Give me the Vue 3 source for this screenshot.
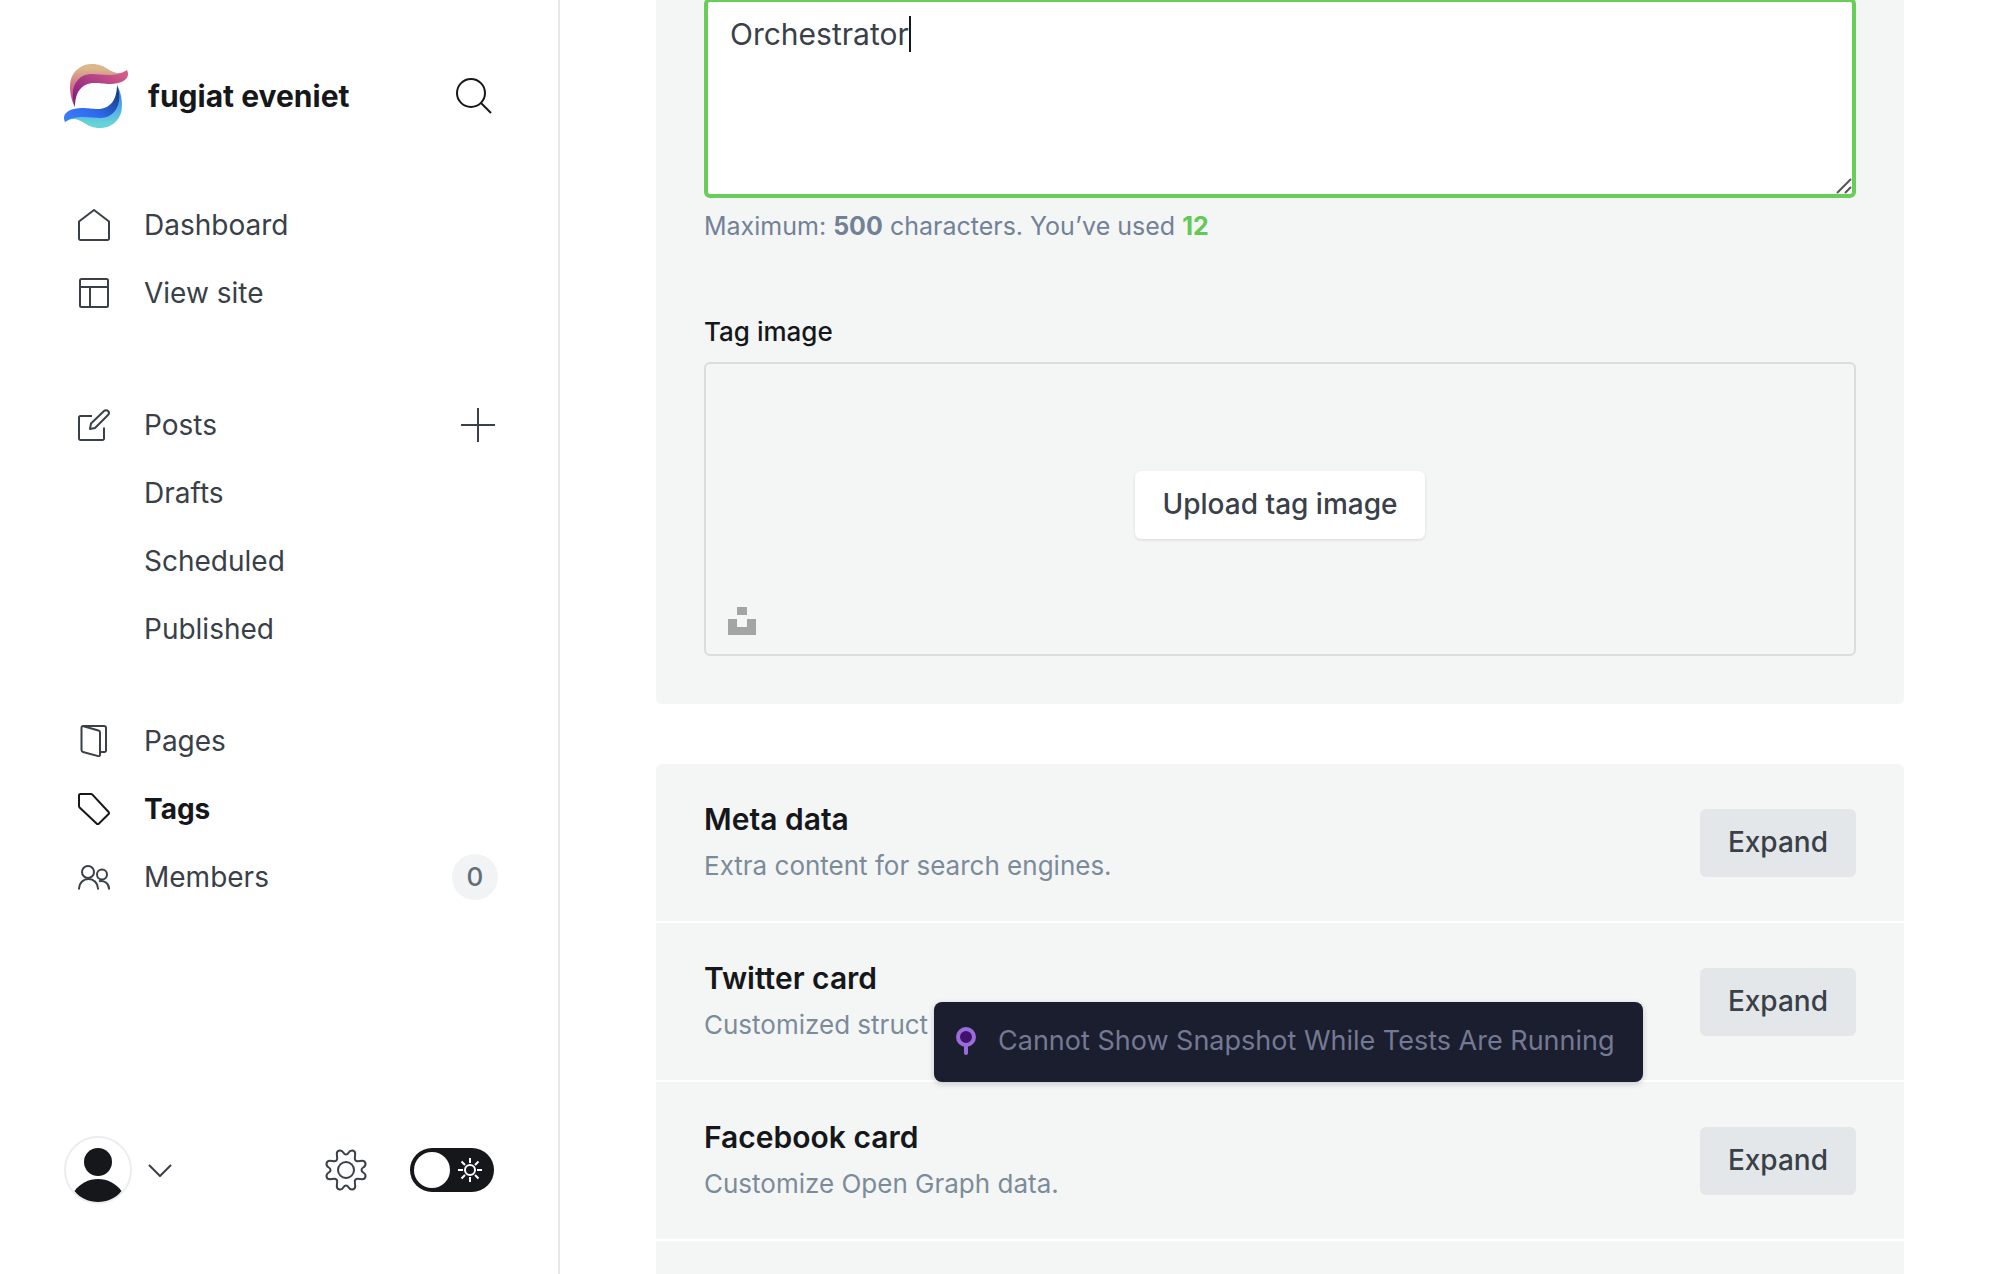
<script setup>
import { ref, computed } from 'vue'

const description = ref('Orchestrator')
const used = computed(() => description.value.length)
const lightMode = ref(true)

const sections = [
  { title: 'Meta data', text: 'Extra content for search engines.' },
  { title: 'Twitter card', text: 'Customized struct' },
  { title: 'Facebook card', text: 'Customize Open Graph data.' },
]
</script>

<template>
  <div class="app">
    <aside class="sidebar">
      <header class="brand">
        <svg class="logo" viewBox="0 0 64 64" aria-hidden="true">
          <defs>
            <linearGradient id="sand" x1="0" y1="0" x2="0" y2="1">
              <stop offset="0.1" stop-color="#dbb78b" />
              <stop offset="0.5" stop-color="#cf7389" />
              <stop offset="1" stop-color="#b8408a" />
            </linearGradient>
            <linearGradient id="plum" x1="0" y1="1" x2="1" y2="0">
              <stop offset="0.1" stop-color="#861c80" />
              <stop offset="1" stop-color="#dc648a" />
            </linearGradient>
            <linearGradient id="aqua" x1="0" y1="0" x2="0" y2="1">
              <stop offset="0.1" stop-color="#66d3d8" />
              <stop offset="0.6" stop-color="#479ced" />
              <stop offset="1" stop-color="#3b82f9" />
            </linearGradient>
            <linearGradient id="navy" x1="0" y1="1" x2="1" y2="0">
              <stop offset="0.1" stop-color="#173a80" />
              <stop offset="0.6" stop-color="#2f6af0" />
              <stop offset="1" stop-color="#3b82f9" />
            </linearGradient>
          </defs>
          <g v-for="part in [{ back: 'sand', front: 'plum', turn: 0 }, { back: 'aqua', front: 'navy', turn: 180 }]" :key="part.back" :transform="`rotate(${part.turn} 32 32)`">
            <path d="M11 43C7 36 5 26 6.500 17C9 6 18 0 28 0C42 0 45 9 55 9C59 9 61 7 63 6C60 11 54 14 46 13L25 12C15 14 9 22 9 32Z" :fill="`url(#${part.back})`" />
            <path d="M11 43C4 24 14 10 27 10C38 10 52 14 63 6C67 14 59 20 46 20C39 20 37 19 30 19C18 19 11 28 11 43Z" :fill="`url(#${part.front})`" />
          </g>
        </svg>
        <span class="site-title">fugiat eveniet</span>
        <button class="search" aria-label="Search">
          <svg width="36" height="36" viewBox="0 0 36 36"><circle cx="15" cy="15" r="14" /><path d="M25 25l10 10" /></svg>
        </button>
      </header>

      <nav class="nav">
        <ul class="group">
          <li>
            <a href="#dashboard">
              <svg class="icon" viewBox="0 0 32 32"><path d="M1 12.500L16 1l15 11.500V29.500a1.500 1.500 0 0 1-1.500 1.500H2.500A1.500 1.500 0 0 1 1 29.500z" /></svg>
              Dashboard
            </a>
          </li>
          <li>
            <a href="#site">
              <svg class="icon" viewBox="0 0 32 32"><rect x="2" y="2" width="28" height="28" rx="1.500" /><path d="M2 10h28M12 10v20" /></svg>
              View site
            </a>
          </li>
        </ul>
        <ul class="group posts">
          <li>
            <a href="#posts">
              <svg class="icon" viewBox="0 0 32 32"><path d="M14 7H2.500A1.500 1.500 0 0 0 1 8.500v21A1.500 1.500 0 0 0 2.500 31h22a1.500 1.500 0 0 0 1.500-1.500V18.500M12 20l1-5.500L26 2a2.600 2.600 0 0 1 4 4L17 19z" /></svg>
              Posts
            </a>
            <button class="plus" aria-label="New post">
              <svg width="34" height="34" viewBox="0 0 34 34"><path d="M17 0v34M0 17h34" /></svg>
            </button>
          </li>
          <li><a href="#drafts" class="sub">Drafts</a></li>
          <li><a href="#scheduled" class="sub">Scheduled</a></li>
          <li><a href="#published" class="sub">Published</a></li>
        </ul>
        <ul class="group">
          <li>
            <a href="#pages">
              <svg class="icon" viewBox="0 0 32 32"><path d="M4.500 1H26a2 2 0 0 1 2 2v22.500a1.500 1.500 0 0 1-1.500 1.500H22M5.500 1.200l15 4.300A2 2 0 0 1 22 7.400V30a1.200 1.200 0 0 1-1.600 1.100L5 27a2 2 0 0 1-1.500-2V2.600A1.500 1.500 0 0 1 5.500 1.200z" /></svg>
              Pages
            </a>
          </li>
          <li>
            <a href="#tags" class="active" aria-current="page">
              <svg class="icon" viewBox="0 0 32 32"><path d="M2.500 1H13a2 2 0 0 1 1.400.600L30.600 19a1.400 1.400 0 0 1 0 2L20.500 31a1 1 0 0 1-1.400 0L1.600 14.400A2 2 0 0 1 1 13V2.500A1.500 1.500 0 0 1 2.500 1z" /></svg>
              Tags
            </a>
          </li>
          <li>
            <a href="#members">
              <svg class="icon" viewBox="0 0 32 32"><circle cx="10" cy="11" r="6" /><path d="M1 28.500v-1a9.500 9.500 0 0 1 19 0v1" /><circle cx="24" cy="13.500" r="5" /><path d="M21 20.300c5-1.300 10 2 10 7.200v1" /></svg>
              Members
            </a>
            <span class="badge">0</span>
          </li>
        </ul>
      </nav>

      <footer class="account">
        <button class="user" aria-label="Account menu">
          <svg width="68" height="68" viewBox="0 0 68 68">
            <circle cx="34" cy="34" r="33" fill="#fff" stroke="#ebedee" stroke-width="2" />
            <circle cx="34" cy="26" r="14" fill="#15171a" />
            <path d="M10.500 55C16 47.500 24.500 43 34 43s18 4.500 23.500 12C51.500 62.500 43 66 34 66s-17.500-3.500-23.500-11z" fill="#15171a" />
          </svg>
          <svg class="chevron" width="24" height="14" viewBox="0 0 24 14"><path d="M1 2l11 11L23 2" /></svg>
        </button>
        <a href="#settings" class="settings" aria-label="Settings">
          <svg width="42" height="42" viewBox="-21 -21 42 42">
            <circle r="8" />
            <path v-for="n in 4" :key="n" :transform="`rotate(${n * 90})`" d="M0-15.500Q1.500-15.500 2.500-17.200Q4-19.800 6.500-19.500Q9.300-19 9.200-16L8.800-12Q8.700-8.700 12-8.800L16-9.200Q19-9.300 19.500-6.500Q19.800-4 17.200-2.500Q15.500-1.500 15.500 0" />
          </svg>
        </a>
        <label class="theme">
          <input v-model="lightMode" type="checkbox" aria-label="Light theme" />
          <span class="knob"></span>
          <svg width="24" height="24" viewBox="0 0 24 24"><circle cx="12" cy="12" r="5" /><path d="M12 0v5M12 19v5M0 12h5M19 12h5M3.500 3.500L7 7M17 17l3.500 3.500M3.500 20.500L7 17M17 7l3.500-3.500" /></svg>
        </label>
      </footer>
    </aside>

    <main class="main">
      <section class="card details">
        <div class="field">
          <textarea v-model="description" aria-label="Description" spellcheck="false"></textarea>
          <span class="caret"></span>
          <svg class="grip" width="16" height="16" viewBox="0 0 16 16"><path d="M1 15L15 1M9 15l6-6" /></svg>
        </div>
        <p class="hint">Maximum: <b>500</b> characters. You’ve used <b class="used">{{ used }}</b></p>
        <h4 class="label">Tag image</h4>
        <div class="uploader">
          <button class="upload">Upload tag image</button>
          <button class="unsplash" aria-label="Choose from Unsplash">
            <svg width="28" height="28" viewBox="0 0 28 28"><path d="M9 0h10v8H9zM0 12h9v8h10v-8h9v16H0z" /></svg>
          </button>
        </div>
      </section>

      <section class="card sections">
        <div v-for="s in sections" :key="s.title" class="row">
          <div>
            <h4 class="row-title">{{ s.title }}</h4>
            <p class="row-text">{{ s.text }}</p>
          </div>
          <button class="expand">Expand</button>
        </div>
      </section>

      <div class="toast" role="status">
        <svg width="20" height="28" viewBox="0 0 20 28"><path d="M10 19v7" /><circle cx="10" cy="10" r="8" /></svg>
        Cannot Show Snapshot While Tests Are Running
      </div>
    </main>
  </div>
</template>

<style>
body {
  margin: 0;
  overflow: hidden;
}
</style>

<style scoped>
.app {
  display: flex;
  height: 100vh;
  overflow: hidden;
  background: #fff;
  color: #394047;
  font-family: Inter, "Liberation Sans", sans-serif;
  font-size: 28px;
  line-height: 36px;
}
.app * {
  box-sizing: border-box;
}
h4,
p,
ul {
  margin: 0;
  padding: 0;
}
ul {
  list-style: none;
}
a {
  color: inherit;
  text-decoration: none;
}
button {
  margin: 0;
  padding: 0;
  border: 0;
  background: none;
  color: inherit;
  font: inherit;
}
svg {
  display: block;
  flex: none;
  fill: none;
  stroke: currentColor;
  stroke-width: 2;
  stroke-linejoin: round;
}

.sidebar {
  display: flex;
  flex: none;
  flex-direction: column;
  width: 560px;
  border-right: 2px solid #e5e8eb;
}
.brand {
  display: flex;
  align-items: center;
  padding: 64px 66px 63px 64px;
}
.logo {
  width: 64px;
  height: 64px;
  stroke: none;
}
.site-title {
  flex: 1;
  padding-left: 20px;
  color: #15171a;
  font-size: 30px;
  font-weight: 700;
}
.search {
  color: #15171a;
}
.nav {
  flex: 1;
}
.group.posts {
  margin: 64px 0 44px;
}
.group li {
  display: flex;
  align-items: center;
  height: 68px;
  padding: 0 60px 0 78px;
}
.group a {
  display: flex;
  flex: 1;
  align-items: center;
  gap: 34px;
}
.group a.sub {
  padding-left: 66px;
}
.group a.active {
  color: #15171a;
  font-weight: 700;
}
.icon {
  width: 32px;
  height: 32px;
}
.plus {
  margin-right: 3px;
}
.badge {
  width: 46px;
  height: 46px;
  border-radius: 50%;
  background: #f1f3f4;
  color: #626d79;
  font-size: 26px;
  font-weight: 500;
  line-height: 46px;
  text-align: center;
}
.account {
  display: flex;
  align-items: center;
  padding: 0 64px 70px;
}
.user {
  display: flex;
  flex: 1;
  align-items: center;
  gap: 16px;
}
.user > svg:first-child {
  stroke: none;
}
.settings {
  margin-right: 43px;
}
.theme {
  position: relative;
  display: flex;
  align-items: center;
  gap: 8px;
  width: 84px;
  height: 44px;
  padding: 4px;
  border-radius: 22px;
  background: #15171a;
  color: #fff;
}
.theme input {
  position: absolute;
  inset: 0;
  width: 100%;
  height: 100%;
  margin: 0;
  opacity: 0;
}
.knob {
  width: 36px;
  height: 36px;
  border-radius: 50%;
  background: #fff;
}

.main {
  position: relative;
  display: flex;
  flex: 1;
  flex-direction: column;
  padding: 0 96px;
  overflow: hidden;
}
.card {
  border-radius: 6px;
  background: #f4f6f6;
}
.details {
  margin-bottom: 60px;
  padding: 0 48px 48px;
  border-radius: 0 0 6px 6px;
}
.sections {
  flex: 1;
  border-radius: 6px 6px 0 0;
}
.field {
  position: relative;
  margin-top: -2px;
}
textarea {
  display: block;
  width: 100%;
  height: 200px;
  padding: 14px 22px;
  border: 4px solid #69cd5a;
  border-radius: 6px;
  outline: 0;
  background: #fff;
  color: #394047;
  font: inherit;
  font-size: 30px;
  resize: none;
}
.caret {
  position: absolute;
  top: 18px;
  left: 205px;
  width: 2px;
  height: 36px;
  background: #15171a;
}
.grip {
  position: absolute;
  right: 4px;
  bottom: 4px;
  color: #555;
}
.hint {
  margin-top: 10px;
  color: #738196;
  font-size: 25px;
}
.used {
  color: #62c953;
}
.label {
  margin: 70px 0 12px;
  color: #15171a;
  font-size: 26px;
  font-weight: 500;
}
.uploader {
  position: relative;
  display: flex;
  align-items: center;
  justify-content: center;
  height: 294px;
  border: 2px solid #dadddd;
  border-radius: 6px;
}
.upload,
.expand {
  height: 68px;
  padding: 0 28px 2px;
  border-radius: 6px;
  background: #e3e7ea;
  font-weight: 500;
}
.upload {
  margin-bottom: 8px;
  background: #fff;
  box-shadow: 0 1px 3px rgba(0, 0, 0, 0.12);
}
.unsplash {
  position: absolute;
  bottom: 19px;
  left: 22px;
}
.unsplash svg {
  fill: #a3a5a5;
  stroke: none;
}
.row {
  display: flex;
  align-items: center;
  justify-content: space-between;
  height: 159px;
  padding: 0 48px;
  border-bottom: 2px solid #fff;
}
.row-title {
  margin-bottom: 12px;
  color: #15171a;
  font-size: 30px;
  font-weight: 600;
  line-height: 34px;
}
.row-text {
  color: #7c8b9a;
  font-size: 26px;
}
.toast {
  position: absolute;
  bottom: 192px;
  left: 374px;
  display: flex;
  align-items: center;
  gap: 22px;
  height: 80px;
  padding: 0 28px 2px 22px;
  border-radius: 8px;
  background: #1b1e2e;
  box-shadow: 0 2px 6px rgba(0, 0, 0, 0.18);
  color: #747994;
  font-size: 27px;
  white-space: nowrap;
}
.toast svg {
  fill: #3f136b;
  stroke: #9a6dda;
  stroke-linecap: round;
  stroke-width: 4;
}
</style>
